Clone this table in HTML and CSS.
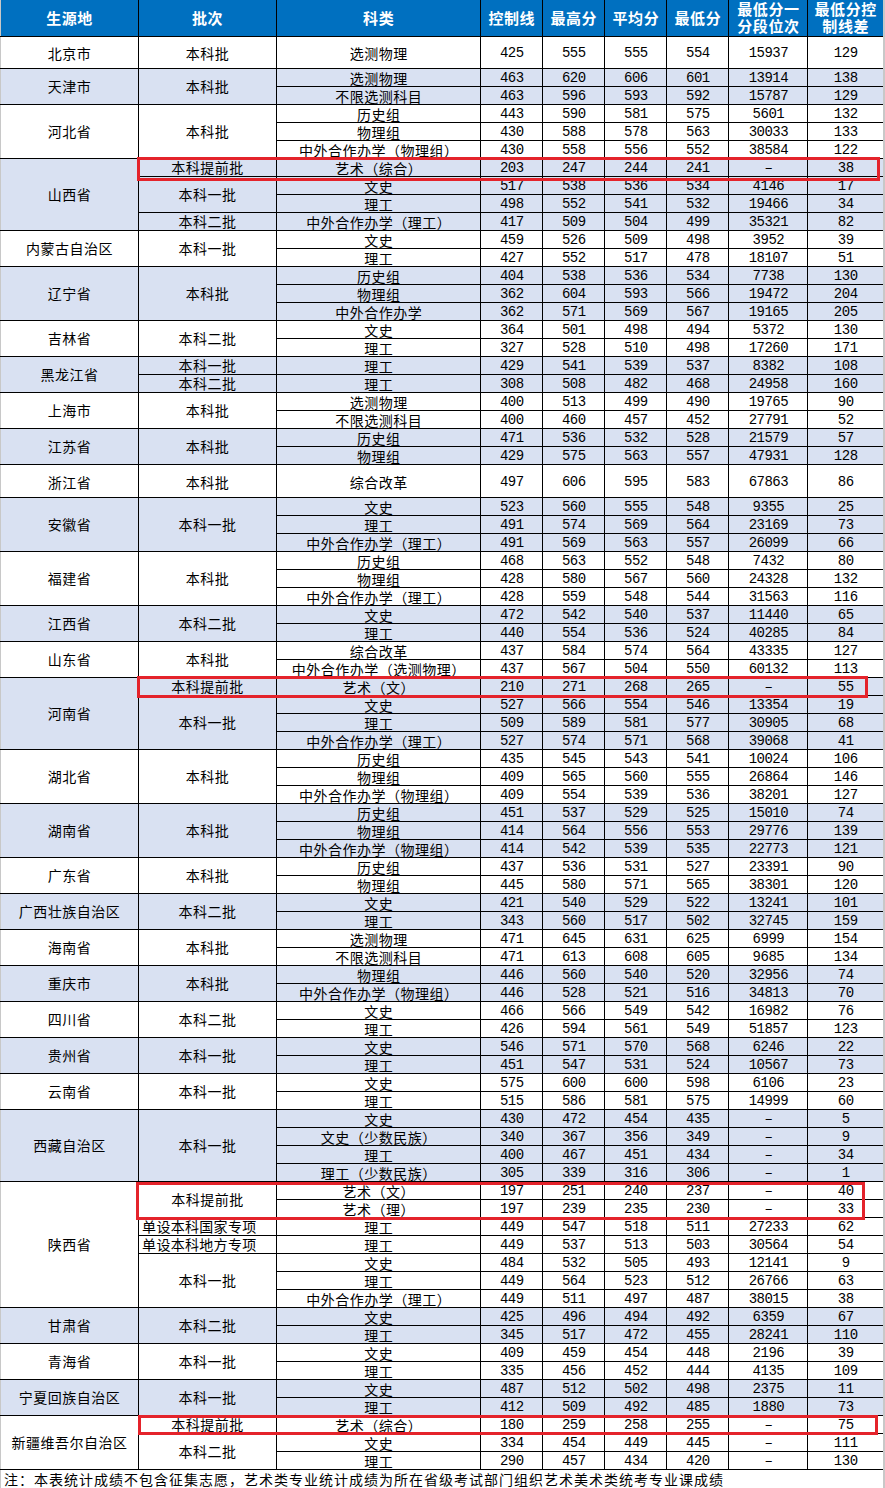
FILE: index.html
```html
<!DOCTYPE html>
<html lang="zh-CN">
<head>
<meta charset="utf-8">
<title>各省录取分数统计</title>
<link rel="stylesheet" href="styles.css">
</head>
<body>
<div class="wrap">
<table class="grid">
<colgroup>
<col class="c1"><col class="c2"><col class="c3"><col class="c4"><col class="c5"><col class="c6"><col class="c7"><col class="c8"><col class="c9">
</colgroup>
<thead>
<tr class="h"><th class="p">生源地</th><th>批次</th><th>科类</th><th>控制线</th><th>最高分</th><th>平均分</th><th>最低分</th><th class="two"><span class="ln">最低分一</span><span class="ln">分段位次</span></th><th class="two"><span class="ln">最低分控</span><span class="ln">制线差</span></th></tr>
</thead>
<tbody>
<tr class="one"><td class="p">北京市</td><td class="b">本科批</td><td class="k">选测物理</td><td>425</td><td>555</td><td>555</td><td>554</td><td>15937</td><td>129</td></tr>

<tr class="s"><td class="p" rowspan="2">天津市</td><td class="b" rowspan="2">本科批</td><td class="k">选测物理</td><td>463</td><td>620</td><td>606</td><td>601</td><td>13914</td><td>138</td></tr>
<tr class="s"><td class="k">不限选测科目</td><td>463</td><td>596</td><td>593</td><td>592</td><td>15787</td><td>129</td></tr>

<tr><td class="p" rowspan="3">河北省</td><td class="b" rowspan="3">本科批</td><td class="k">历史组</td><td>443</td><td>590</td><td>581</td><td>575</td><td>5601</td><td>132</td></tr>
<tr><td class="k">物理组</td><td>430</td><td>588</td><td>578</td><td>563</td><td>30033</td><td>133</td></tr>
<tr><td class="k">中外合作办学（物理组）</td><td>430</td><td>558</td><td>556</td><td>552</td><td>38584</td><td>122</td></tr>

<tr class="s"><td class="p" rowspan="4">山西省</td><td class="b">本科提前批</td><td class="k">艺术（综合）</td><td>203</td><td>247</td><td>244</td><td>241</td><td>–</td><td>38</td></tr>
<tr class="s"><td class="b" rowspan="2">本科一批</td><td class="k">文史</td><td>517</td><td>538</td><td>536</td><td>534</td><td>4146</td><td>17</td></tr>
<tr class="s"><td class="k">理工</td><td>498</td><td>552</td><td>541</td><td>532</td><td>19466</td><td>34</td></tr>
<tr class="s"><td class="b">本科二批</td><td class="k">中外合作办学（理工）</td><td>417</td><td>509</td><td>504</td><td>499</td><td>35321</td><td>82</td></tr>

<tr><td class="p" rowspan="2">内蒙古自治区</td><td class="b" rowspan="2">本科一批</td><td class="k">文史</td><td>459</td><td>526</td><td>509</td><td>498</td><td>3952</td><td>39</td></tr>
<tr><td class="k">理工</td><td>427</td><td>552</td><td>517</td><td>478</td><td>18107</td><td>51</td></tr>

<tr class="s"><td class="p" rowspan="3">辽宁省</td><td class="b" rowspan="3">本科批</td><td class="k">历史组</td><td>404</td><td>538</td><td>536</td><td>534</td><td>7738</td><td>130</td></tr>
<tr class="s"><td class="k">物理组</td><td>362</td><td>604</td><td>593</td><td>566</td><td>19472</td><td>204</td></tr>
<tr class="s"><td class="k">中外合作办学</td><td>362</td><td>571</td><td>569</td><td>567</td><td>19165</td><td>205</td></tr>

<tr><td class="p" rowspan="2">吉林省</td><td class="b" rowspan="2">本科二批</td><td class="k">文史</td><td>364</td><td>501</td><td>498</td><td>494</td><td>5372</td><td>130</td></tr>
<tr><td class="k">理工</td><td>327</td><td>528</td><td>510</td><td>498</td><td>17260</td><td>171</td></tr>

<tr class="s"><td class="p" rowspan="2">黑龙江省</td><td class="b">本科一批</td><td class="k">理工</td><td>429</td><td>541</td><td>539</td><td>537</td><td>8382</td><td>108</td></tr>
<tr class="s"><td class="b">本科二批</td><td class="k">理工</td><td>308</td><td>508</td><td>482</td><td>468</td><td>24958</td><td>160</td></tr>

<tr><td class="p" rowspan="2">上海市</td><td class="b" rowspan="2">本科批</td><td class="k">选测物理</td><td>400</td><td>513</td><td>499</td><td>490</td><td>19765</td><td>90</td></tr>
<tr><td class="k">不限选测科目</td><td>400</td><td>460</td><td>457</td><td>452</td><td>27791</td><td>52</td></tr>

<tr class="s"><td class="p" rowspan="2">江苏省</td><td class="b" rowspan="2">本科批</td><td class="k">历史组</td><td>471</td><td>536</td><td>532</td><td>528</td><td>21579</td><td>57</td></tr>
<tr class="s"><td class="k">物理组</td><td>429</td><td>575</td><td>563</td><td>557</td><td>47931</td><td>128</td></tr>

<tr class="zj"><td class="p">浙江省</td><td class="b">本科批</td><td class="k">综合改革</td><td>497</td><td>606</td><td>595</td><td>583</td><td>67863</td><td>86</td></tr>

<tr class="s"><td class="p" rowspan="3">安徽省</td><td class="b" rowspan="3">本科一批</td><td class="k">文史</td><td>523</td><td>560</td><td>555</td><td>548</td><td>9355</td><td>25</td></tr>
<tr class="s"><td class="k">理工</td><td>491</td><td>574</td><td>569</td><td>564</td><td>23169</td><td>73</td></tr>
<tr class="s"><td class="k">中外合作办学（理工）</td><td>491</td><td>569</td><td>563</td><td>557</td><td>26099</td><td>66</td></tr>

<tr><td class="p" rowspan="3">福建省</td><td class="b" rowspan="3">本科批</td><td class="k">历史组</td><td>468</td><td>563</td><td>552</td><td>548</td><td>7432</td><td>80</td></tr>
<tr><td class="k">物理组</td><td>428</td><td>580</td><td>567</td><td>560</td><td>24328</td><td>132</td></tr>
<tr><td class="k">中外合作办学（理工）</td><td>428</td><td>559</td><td>548</td><td>544</td><td>31563</td><td>116</td></tr>

<tr class="s"><td class="p" rowspan="2">江西省</td><td class="b" rowspan="2">本科二批</td><td class="k">文史</td><td>472</td><td>542</td><td>540</td><td>537</td><td>11440</td><td>65</td></tr>
<tr class="s"><td class="k">理工</td><td>440</td><td>554</td><td>536</td><td>524</td><td>40285</td><td>84</td></tr>

<tr><td class="p" rowspan="2">山东省</td><td class="b" rowspan="2">本科批</td><td class="k">综合改革</td><td>437</td><td>584</td><td>574</td><td>564</td><td>43335</td><td>127</td></tr>
<tr><td class="k">中外合作办学（选测物理）</td><td>437</td><td>567</td><td>504</td><td>550</td><td>60132</td><td>113</td></tr>

<tr class="s"><td class="p" rowspan="4">河南省</td><td class="b">本科提前批</td><td class="k">艺术（文）</td><td>210</td><td>271</td><td>268</td><td>265</td><td>–</td><td>55</td></tr>
<tr class="s"><td class="b" rowspan="3">本科一批</td><td class="k">文史</td><td>527</td><td>566</td><td>554</td><td>546</td><td>13354</td><td>19</td></tr>
<tr class="s"><td class="k">理工</td><td>509</td><td>589</td><td>581</td><td>577</td><td>30905</td><td>68</td></tr>
<tr class="s"><td class="k">中外合作办学（理工）</td><td>527</td><td>574</td><td>571</td><td>568</td><td>39068</td><td>41</td></tr>

<tr><td class="p" rowspan="3">湖北省</td><td class="b" rowspan="3">本科批</td><td class="k">历史组</td><td>435</td><td>545</td><td>543</td><td>541</td><td>10024</td><td>106</td></tr>
<tr><td class="k">物理组</td><td>409</td><td>565</td><td>560</td><td>555</td><td>26864</td><td>146</td></tr>
<tr><td class="k">中外合作办学（物理组）</td><td>409</td><td>554</td><td>539</td><td>536</td><td>38201</td><td>127</td></tr>

<tr class="s"><td class="p" rowspan="3">湖南省</td><td class="b" rowspan="3">本科批</td><td class="k">历史组</td><td>451</td><td>537</td><td>529</td><td>525</td><td>15010</td><td>74</td></tr>
<tr class="s"><td class="k">物理组</td><td>414</td><td>564</td><td>556</td><td>553</td><td>29776</td><td>139</td></tr>
<tr class="s"><td class="k">中外合作办学（物理组）</td><td>414</td><td>542</td><td>539</td><td>535</td><td>22773</td><td>121</td></tr>

<tr><td class="p" rowspan="2">广东省</td><td class="b" rowspan="2">本科批</td><td class="k">历史组</td><td>437</td><td>536</td><td>531</td><td>527</td><td>23391</td><td>90</td></tr>
<tr><td class="k">物理组</td><td>445</td><td>580</td><td>571</td><td>565</td><td>38301</td><td>120</td></tr>

<tr class="s"><td class="p" rowspan="2">广西壮族自治区</td><td class="b" rowspan="2">本科二批</td><td class="k">文史</td><td>421</td><td>540</td><td>529</td><td>522</td><td>13241</td><td>101</td></tr>
<tr class="s"><td class="k">理工</td><td>343</td><td>560</td><td>517</td><td>502</td><td>32745</td><td>159</td></tr>

<tr><td class="p" rowspan="2">海南省</td><td class="b" rowspan="2">本科批</td><td class="k">选测物理</td><td>471</td><td>645</td><td>631</td><td>625</td><td>6999</td><td>154</td></tr>
<tr><td class="k">不限选测科目</td><td>471</td><td>613</td><td>608</td><td>605</td><td>9685</td><td>134</td></tr>

<tr class="s"><td class="p" rowspan="2">重庆市</td><td class="b" rowspan="2">本科批</td><td class="k">物理组</td><td>446</td><td>560</td><td>540</td><td>520</td><td>32956</td><td>74</td></tr>
<tr class="s"><td class="k">中外合作办学（物理组）</td><td>446</td><td>528</td><td>521</td><td>516</td><td>34813</td><td>70</td></tr>

<tr><td class="p" rowspan="2">四川省</td><td class="b" rowspan="2">本科二批</td><td class="k">文史</td><td>466</td><td>566</td><td>549</td><td>542</td><td>16982</td><td>76</td></tr>
<tr><td class="k">理工</td><td>426</td><td>594</td><td>561</td><td>549</td><td>51857</td><td>123</td></tr>

<tr class="s"><td class="p" rowspan="2">贵州省</td><td class="b" rowspan="2">本科一批</td><td class="k">文史</td><td>546</td><td>571</td><td>570</td><td>568</td><td>6246</td><td>22</td></tr>
<tr class="s"><td class="k">理工</td><td>451</td><td>547</td><td>531</td><td>524</td><td>10567</td><td>73</td></tr>

<tr><td class="p" rowspan="2">云南省</td><td class="b" rowspan="2">本科一批</td><td class="k">文史</td><td>575</td><td>600</td><td>600</td><td>598</td><td>6106</td><td>23</td></tr>
<tr><td class="k">理工</td><td>515</td><td>586</td><td>581</td><td>575</td><td>14999</td><td>60</td></tr>

<tr class="s"><td class="p" rowspan="4">西藏自治区</td><td class="b" rowspan="4">本科一批</td><td class="k">文史</td><td>430</td><td>472</td><td>454</td><td>435</td><td>–</td><td>5</td></tr>
<tr class="s"><td class="k">文史（少数民族）</td><td>340</td><td>367</td><td>356</td><td>349</td><td>–</td><td>9</td></tr>
<tr class="s"><td class="k">理工</td><td>400</td><td>467</td><td>451</td><td>434</td><td>–</td><td>34</td></tr>
<tr class="s"><td class="k">理工（少数民族）</td><td>305</td><td>339</td><td>316</td><td>306</td><td>–</td><td>1</td></tr>

<tr><td class="p" rowspan="7">陕西省</td><td class="b" rowspan="2">本科提前批</td><td class="k">艺术（文）</td><td>197</td><td>251</td><td>240</td><td>237</td><td>–</td><td>40</td></tr>
<tr><td class="k">艺术（理）</td><td>197</td><td>239</td><td>235</td><td>230</td><td>–</td><td>33</td></tr>
<tr><td class="b l">单设本科国家专项</td><td class="k">理工</td><td>449</td><td>547</td><td>518</td><td>511</td><td>27233</td><td>62</td></tr>
<tr><td class="b l">单设本科地方专项</td><td class="k">理工</td><td>449</td><td>537</td><td>513</td><td>503</td><td>30564</td><td>54</td></tr>
<tr><td class="b" rowspan="3">本科一批</td><td class="k">文史</td><td>484</td><td>532</td><td>505</td><td>493</td><td>12141</td><td>9</td></tr>
<tr><td class="k">理工</td><td>449</td><td>564</td><td>523</td><td>512</td><td>26766</td><td>63</td></tr>
<tr><td class="k">中外合作办学（理工）</td><td>449</td><td>511</td><td>497</td><td>487</td><td>38015</td><td>38</td></tr>

<tr class="s"><td class="p" rowspan="2">甘肃省</td><td class="b" rowspan="2">本科二批</td><td class="k">文史</td><td>425</td><td>496</td><td>494</td><td>492</td><td>6359</td><td>67</td></tr>
<tr class="s"><td class="k">理工</td><td>345</td><td>517</td><td>472</td><td>455</td><td>28241</td><td>110</td></tr>

<tr><td class="p" rowspan="2">青海省</td><td class="b" rowspan="2">本科一批</td><td class="k">文史</td><td>409</td><td>459</td><td>454</td><td>448</td><td>2196</td><td>39</td></tr>
<tr><td class="k">理工</td><td>335</td><td>456</td><td>452</td><td>444</td><td>4135</td><td>109</td></tr>

<tr class="s"><td class="p" rowspan="2">宁夏回族自治区</td><td class="b" rowspan="2">本科一批</td><td class="k">文史</td><td>487</td><td>512</td><td>502</td><td>498</td><td>2375</td><td>11</td></tr>
<tr class="s"><td class="k">理工</td><td>412</td><td>509</td><td>492</td><td>485</td><td>1880</td><td>73</td></tr>

<tr><td class="p" rowspan="3">新疆维吾尔自治区</td><td class="b">本科提前批</td><td class="k">艺术（综合）</td><td>180</td><td>259</td><td>258</td><td>255</td><td>–</td><td>75</td></tr>
<tr><td class="b" rowspan="2">本科二批</td><td class="k">文史</td><td>334</td><td>454</td><td>449</td><td>445</td><td>–</td><td>111</td></tr>
<tr><td class="k">理工</td><td>290</td><td>457</td><td>434</td><td>420</td><td>–</td><td>130</td></tr>

<tr class="note"><td class="nt" colspan="9">注：本表统计成绩不包含征集志愿，艺术类专业统计成绩为所在省级考试部门组织艺术美术类统考专业课成绩</td></tr>
</tbody>
</table>
<div class="mark m1"></div>
<div class="mark m2"></div>
<div class="mark m3"></div>
<div class="mark m4"></div>
</div>
</body>
</html>
```

FILE: styles.css
```css
html, body {
  margin: 0;
  padding: 0;
  background: #ffffff;
}

.wrap {
  position: relative;
  width: 885px;
}

.grid {
  border-collapse: collapse;
  table-layout: fixed;
  width: 885px;
  border-left: 1px solid #c8c8c8;
  border-right: 2px solid #c8c8c8;
}

.c1 { width: 138px; }
.c2 { width: 138px; }
.c3 { width: 204px; }
.c4, .c5, .c6, .c7 { width: 62px; }
.c8 { width: 79px; }
.c9 { width: 76px; }

tr { height: 18px; }
tr.h { height: 36px; }
tr.one { height: 32px; }
tr.zj { height: 33px; }
tr.note { height: 19px; }

th {
  background: #0070c0;
  color: #ffffff;
  font-family: "Noto Sans CJK SC", sans-serif;
  font-weight: bold;
  font-size: 15px;
  line-height: 17px;
  letter-spacing: 0.6px;
  text-align: center;
  vertical-align: middle;
  padding: 0;
  border: 1px solid #000;
  border-top: none;
}

th.two { padding-bottom: 1px; }

.ln {
  display: block;
  height: 17px;
  line-height: 17px;
  white-space: nowrap;
}

td {
  border: 1px solid #000;
  padding: 0;
  text-align: center;
  vertical-align: bottom;
  font-family: "Liberation Mono", monospace;
  font-size: 14px;
  line-height: 16px;
  letter-spacing: -0.5px;
  color: #000;
  background: #ffffff;
  white-space: nowrap;
  overflow: hidden;
}

th:last-child, td:last-child { border-right: none; }
.p { border-left: none; }

tr.s td { background: #d9e1f2; }

td.p, td.b, td.k {
  font-family: "Noto Sans CJK SC", sans-serif;
  font-size: 14px;
  letter-spacing: 0.5px;
}

td.p, td.b { vertical-align: middle; }
td.l { text-align: left; padding-left: 3px; letter-spacing: 0.3px; }

tr.one td, tr.zj td { vertical-align: middle; padding-top: 2px; }

td.nt {
  text-align: left;
  vertical-align: middle;
  border: none;
  padding-left: 3px;
  font-family: "Noto Sans CJK SC", sans-serif;
  font-size: 14px;
  letter-spacing: 1px;
}

.mark {
  position: absolute;
  box-sizing: border-box;
  border: 3px solid #e4232b;
  pointer-events: none;
}
.m1 { left: 137px; top: 157px; width: 743px; height: 24px; }
.m2 { left: 137px; top: 676px; width: 731px; height: 22px; }
.m3 { left: 136px; top: 1182px; width: 729px; height: 38px; }
.m4 { left: 138px; top: 1415px; width: 740px; height: 20px; }
```
